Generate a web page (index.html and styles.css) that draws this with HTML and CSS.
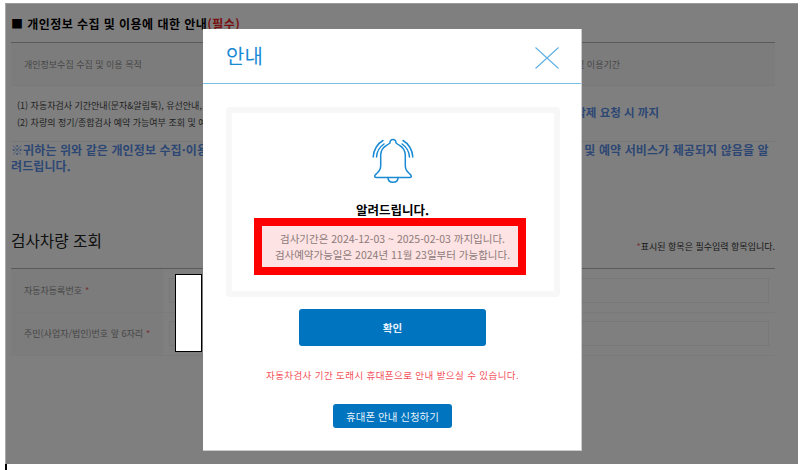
FILE: index.html
```html
<!DOCTYPE html>
<html lang="ko">
<head>
<meta charset="utf-8">
<title>안내</title>
<link rel="stylesheet" href="styles.css">
</head>
<body>
<div class="stage">
  <main class="page">
    <h2 class="sec-title">■ 개인정보 수집 및 이용에 대한 안내<span class="req">(필수)</span></h2>
    <div class="privacy-head">
      <div>개인정보수집 수집 및 이용 목적</div>
      <div class="head-right">보유 및 이용기간</div>
    </div>
    <div class="privacy-body">
      <div class="purposes">
        <p>(1) 자동차검사 기간안내(문자&amp;알림톡), 유선안내, 검사 예약 서비스 제공</p>
        <p>(2) 차량의 정기/종합검사 예약 가능여부 조회 및 예약 정보 확인</p>
      </div>
      <div class="period">삭제 요청 시 까지</div>
    </div>
    <p class="notice">※귀하는 위와 같은 개인정보 수집·이용에 동의하지 않으실 수 있으며, 동의하지 않을 경우엔 자동차검사 기간 안내 및 예약 서비스가 제공되지 않음을 알려드립니다.</p>
    <div class="search-head">
      <h3>검사차량 조회</h3>
      <span class="legend"><i>*</i>표시된 항목은 필수입력 항목입니다.</span>
    </div>
    <div class="form">
      <div class="form-row">
        <div class="form-label">자동차등록번호<i>*</i></div>
        <div class="form-cell"><div class="input"></div></div>
      </div>
      <div class="form-row">
        <div class="form-label">주민(사업자/법인)번호 앞 6자리<i>*</i></div>
        <div class="form-cell"><div class="input"></div></div>
      </div>
    </div>
  </main>
  <div class="dim"></div>
  <div class="redact"></div>
  <section class="modal">
    <header class="modal-head">
      <h1>안내</h1>
      <svg class="close" viewBox="0 0 24 22" width="24" height="22"><path d="M.5.5 23.5 21.5M23.5.5.5 21.5"/></svg>
    </header>
    <div class="modal-body">
      <div class="msg-box">
        <svg class="bell" viewBox="0 0 44 46" width="44" height="46">
          <path d="M22 1.500c-2 0-3.200 1.500-3 3.500-1 .8-2 1.500-3.500 2.300-3.500 2-5.500 5-5.800 9.500v11c0 3-1.500 5.500-3.700 7.500-1.300 1.200-2.300 1.800-2.300 3 0 .9.600 1.200 1.500 1.200h33.600c.9 0 1.500-.3 1.500-1.200 0-1.200-1-1.800-2.300-3-2.200-2-3.700-4.500-3.700-7.500v-11c-.3-4.500-2.300-7.500-5.800-9.500-1.500-.8-2.500-1.500-3.500-2.300.2-2-1-3.500-3-3.500z"/>
          <path d="M17 39.500c0 3 2.200 4.800 5 4.800s5-1.800 5-4.800"/>
          <path d="M2.200 19C2.500 12 6.500 5.500 12 2.500M5.500 19C5.800 14 8.500 9 13 6M41.800 19C41.500 12 37.500 5.500 32 2.500M38.500 19C38.200 14 35.500 9 31 6"/>
        </svg>
        <strong class="msg-title">알려드립니다.</strong>
        <div class="msg-mark">
          <p>검사기간은 2024-12-03 ~ 2025-02-03 까지입니다.</p>
          <p>검사예약가능일은 2024년 11월 23일부터 가능합니다.</p>
        </div>
      </div>
      <button class="btn btn-main">확인</button>
      <p class="hint">자동차검사 기간 도래시 휴대폰으로 안내 받으실 수 있습니다.</p>
      <button class="btn btn-sub">휴대폰 안내 신청하기</button>
    </div>
  </section>
  <div class="corner"></div>
</div>
</body>
</html>
```
FILE: styles.css
```css
* { box-sizing: border-box; }
html, body { margin: 0; height: 100%; background: #fff; overflow: hidden; }
body { font-family: "Noto Sans CJK KR", "Noto Sans", sans-serif; }
p, h1, h2, h3 { margin: 0; }
i { font-style: normal; color: #e66; margin-left: 3px; }

.stage { position: relative; width: 801px; height: 470px; }

.page {
  position: absolute; left: 5px; top: 3px; width: 793px; height: 461px;
  background: #fff; padding: 12px 23px 0 6px; color: #222; overflow: hidden;
}
.sec-title { font-size: 12px; line-height: 18px; font-weight: 700; color: #000; letter-spacing: .45px; }
.req { color: #e22; }

.privacy-head {
  display: flex; justify-content: space-between; align-items: center;
  margin-top: 9px; height: 44px; padding: 0 155px 0 13px;
  border-top: 1px solid #b4b4b4; border-bottom: 1px solid #f2f2f2; background: #f8f8f8;
  font-size: 9px; color: #8e8e8e;
}
.privacy-body { display: flex; justify-content: space-between; height: 56px; border-bottom: 1px solid #eee; }
.purposes { padding: 11px 0 0 6px; font-size: 9px; line-height: 17px; color: #444; white-space: nowrap; }
.period { margin: 18px 116px 0 0; font-size: 11.500px; font-weight: 700; color: #5b8fe8; }
.notice { font-size: 12px; line-height: 16px; font-weight: 700; color: #5b8fe8; letter-spacing: .1px; }

.search-head { display: flex; justify-content: space-between; align-items: flex-end; margin-top: 57px; height: 28px; }
.search-head h3 { font-size: 15.700px; line-height: 26px; font-weight: 400; color: #222; padding-bottom: 5px; }
.legend { font-size: 9px; line-height: 12px; color: #333; margin-bottom: 6px; }
.legend i { margin-left: 0; }

.form { margin-top: 9px; border-top: 1px solid #b4b4b4; }
.form-row { display: flex; height: 43.500px; border-bottom: 1px solid #f4f4f4; }
.form-label { display: flex; align-items: center; width: 152px; padding-left: 13px; background: #f8f8f8; font-size: 9px; color: #8e8e8e; white-space: nowrap; }
.form-cell { flex: 1; display: flex; align-items: center; padding: 0 6px; }
.input { width: 100%; height: 25px; border: 1px solid #f0f0f0; background: #fff; }

.dim { position: absolute; left: 5px; top: 3px; width: 793px; height: 461px; background: rgba(0,0,0,.5); border-top: 1px solid #999; border-left: 1px solid #aaa; }
.redact { position: absolute; left: 175px; top: 274px; width: 27px; height: 78px; background: #fff; border: 1px solid #000; }
.corner { position: absolute; left: 5px; top: 464px; width: 2px; height: 6px; background: #000; }

.modal { position: absolute; left: 203px; top: 29px; width: 379px; height: 422px; background: #fff; border-right: 1px solid #ccc; border-bottom: 1px solid #ccc; }
.modal-head { display: flex; justify-content: space-between; align-items: center; height: 55px; padding: 0 22px 0 23px; border-bottom: 1px solid #7cc0e6; }
.modal-head h1 { font-size: 20px; line-height: 28px; font-weight: 400; color: #1a8ad4; }
.close { margin-top: 4px; }
.close path { fill: none; stroke: #5fb0e2; stroke-width: 1.100; }

.modal-body { display: flex; flex-direction: column; align-items: center; padding: 23px 22px 0 23px; }
.msg-box { display: flex; flex-direction: column; align-items: center; width: 334px; height: 190px; border: 6px solid #f7f7f7; border-radius: 4px; padding-top: 25px; }
.bell path { fill: none; stroke: #1a8ad4; stroke-width: 1.500; stroke-linecap: round; stroke-linejoin: round; }
.msg-title { margin-top: 17px; font-size: 12.500px; line-height: 18px; color: #000; }
.msg-mark { width: 272px; height: 57px; margin: -1px 6px 0 0; border: 8px solid #f00; background: #fde3e3; text-align: center; font-size: 10.500px; line-height: 16px; color: #8c7a7a; padding: 5px 0 0 6px; white-space: nowrap; }
.btn { display: block; border: 0; background: #0074bf; color: #e6f2fa; font-family: inherit; border-radius: 3px; padding: 0; }
.btn-main { width: 187px; height: 37px; margin-top: 12px; font-size: 10.500px; font-weight: 700; }
.hint { margin-top: 22px; font-size: 9.500px; line-height: 14px; color: #f4505a; letter-spacing: .4px; white-space: nowrap; }
.btn-sub { width: 119px; height: 24px; margin-top: 22px; font-size: 10.500px; }
```
